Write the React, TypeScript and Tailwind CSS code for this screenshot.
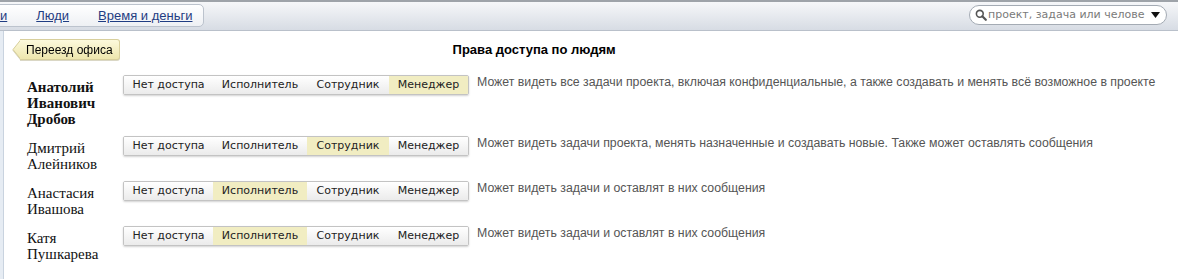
const roles = ['Нет доступа', 'Исполнитель', 'Сотрудник', 'Менеджер'];
const roleWidths = ['w-[89px]', 'w-[94px]', 'w-[82px]', 'w-[79px]'];

const people = [
  {
    name: ['Анатолий', 'Иванович', 'Дробов'],
    role: 3,
    bold: true,
    note: 'Может видеть все задачи проекта, включая конфиденциальные, а также создавать и менять всё возможное в проекте',
  },
  {
    name: ['Дмитрий', 'Алейников'],
    role: 2,
    note: 'Может видеть задачи проекта, менять назначенные и создавать новые. Также может оставлять сообщения',
  },
  {
    name: ['Анастасия', 'Ивашова'],
    role: 1,
    note: 'Может видеть задачи и оставлят в них сообщения',
  },
  {
    name: ['Катя', 'Пушкарева'],
    role: 1,
    note: 'Может видеть задачи и оставлят в них сообщения',
  },
];

function TopBar() {
  return (
    <div className="h-[31px] border-t-2 border-[#9ea3a9] border-b border-b-[#b9c0ca] bg-gradient-to-b from-[#f6f7f9] to-[#d7dce4] flex items-start justify-between">
      <div className="mt-[2px] h-[23px] w-[210px] -ml-[6px] rounded-[5px] border border-[#bcc3cd] bg-gradient-to-b from-white to-[#eef0f4] flex items-center gap-[29px] pl-[5px] font-['Liberation_Sans',Arial,sans-serif] text-[13px] text-[#1f3c82]">
        <a className="underline">и</a>
        <a className="underline">Люди</a>
        <a className="underline">Время и деньги</a>
      </div>
      <div className="mt-[3px] mr-[11px] h-[20px] w-[198px] rounded-full border border-[#a4abb4] bg-white flex items-center pl-[5px] pr-[6px] font-['DejaVu_Sans',Verdana,sans-serif] text-[11px] text-[#7a7a7a]">
        <svg width="12" height="12" viewBox="0 0 12 12" className="shrink-0">
          <circle cx="4.8" cy="4.8" r="3.4" fill="none" stroke="#555" strokeWidth="1.6" />
          <path d="M7.3 7.3 L10.8 10.8" stroke="#555" strokeWidth="2.2" strokeLinecap="round" />
        </svg>
        <span className="ml-[1px] flex-1 whitespace-nowrap overflow-hidden">проект, задача или челове</span>
        <svg width="9" height="6" viewBox="0 0 9 6" className="shrink-0">
          <path d="M0 0 H9 L4.5 6 Z" fill="#111" />
        </svg>
      </div>
    </div>
  );
}

function Tag({ label }: { label: string }) {
  return (
    <div className="flex items-stretch h-[21px] drop-shadow-[0_1px_0_rgba(150,140,90,0.35)]">
      <svg width="9" height="21" viewBox="0 0 9 21" className="shrink-0">
        <defs>
          <linearGradient id="tg" x1="0" y1="0" x2="0" y2="1">
            <stop offset="0" stopColor="#fcf9dc" />
            <stop offset="1" stopColor="#eee6ad" />
          </linearGradient>
        </defs>
        <path d="M9 0.5 L1 10.5 L9 20.5" fill="url(#tg)" stroke="#d8cf9c" />
      </svg>
      <div className="-ml-[1px] pl-[6px] pr-[6px] rounded-r-[3px] border border-l-0 border-[#d8cf9c] bg-gradient-to-b from-[#fcf9dc] to-[#eee6ad] flex items-center font-['Liberation_Sans',Arial,sans-serif] text-[12px] text-black">
        {label}
      </div>
    </div>
  );
}

function RoleSwitch({ active }: { active: number }) {
  return (
    <div className="flex h-[20px] shrink-0 rounded-[2px] border border-[#c3c3c3] shadow-[0_1px_2px_rgba(0,0,0,0.18)] overflow-hidden font-['DejaVu_Sans',Verdana,sans-serif] text-[11px] text-[#222]">
      {roles.map((r, i) => (
        <div
          key={r}
          className={`${roleWidths[i]} flex items-center justify-center ${
            i === active ? 'bg-[#f1edc2]' : 'bg-gradient-to-b from-white to-[#ebebeb]'
          }`}
        >
          {r}
        </div>
      ))}
    </div>
  );
}

export default function App() {
  return (
    <div className="w-[1178px] h-[279px] bg-white overflow-hidden flex flex-col">
      <TopBar />
      <div className="flex flex-1">
        <div className="w-[4px] bg-[#e6ecf3] border-r border-[#c9d3df]" />
        <div className="flex-1 pl-[8px] pt-[8px]">
          <div className="flex items-center">
            <Tag label="Переезд офиса" />
            <div className="ml-[333px] font-['Liberation_Sans',Arial,sans-serif] text-[13px] font-bold text-black">
              Права доступа по людям
            </div>
          </div>
          <div className="mt-[15px] pl-[15px] flex flex-col gap-[9px]">
            {people.map((p) => (
              <div key={p.name.join(' ')} className="flex items-start">
                <div
                  className={`w-[96px] shrink-0 pt-[4px] font-['Liberation_Serif','Times_New_Roman',serif] text-[15px] leading-[16px] text-[#111] ${
                    p.bold ? 'font-bold' : ''
                  }`}
                >
                  {p.name.map((n) => (
                    <div key={n}>{n}</div>
                  ))}
                </div>
                <RoleSwitch active={p.role} />
                <div className="ml-[8px] font-['Liberation_Sans',Arial,sans-serif] text-[12.3px] leading-[14px] text-[#555] whitespace-nowrap">
                  {p.note}
                </div>
              </div>
            ))}
          </div>
        </div>
      </div>
    </div>
  );
}
